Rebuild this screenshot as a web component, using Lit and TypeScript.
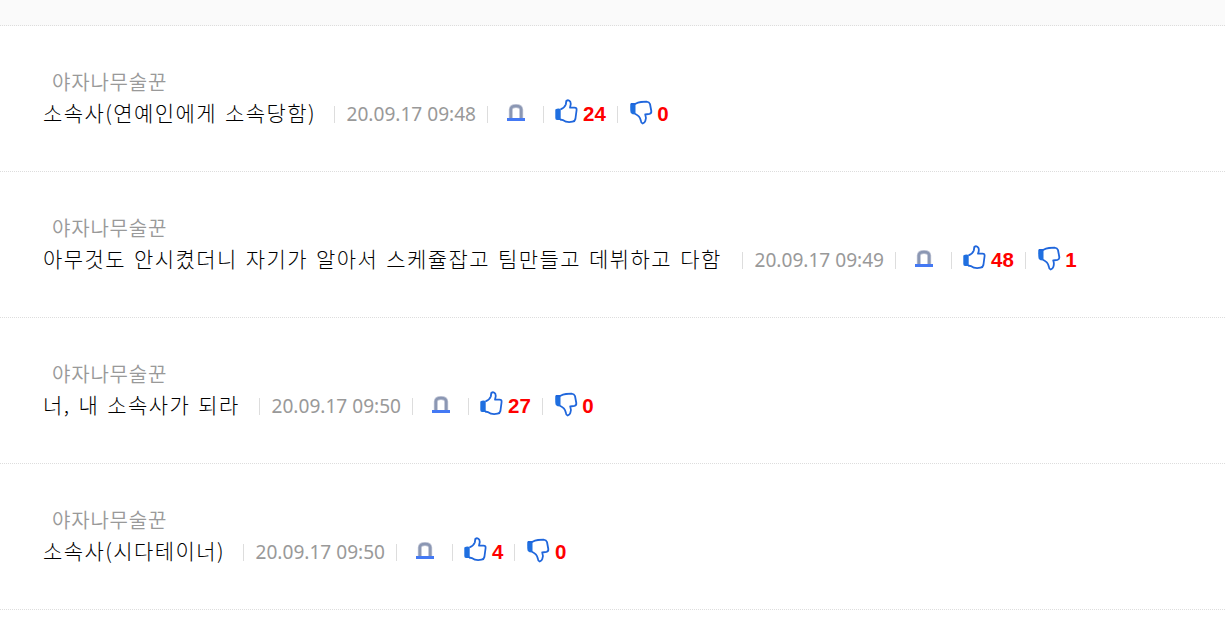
import { html, css, LitElement } from 'lit';
import { customElement, property } from 'lit/decorators.js';

interface Comment {
  author: string;
  text: string;
  date: string;
  likes: number;
  dislikes: number;
  width: number;
}

const COMMENTS: Comment[] = [
  { author: '야자나무술꾼', text: '소속사(연예인에게 소속당함)', date: '20.09.17 09:48', likes: 24, dislikes: 0, width: 291 },
  { author: '야자나무술꾼', text: '아무것도 안시켰더니 자기가 알아서 스케쥴잡고 팀만들고 데뷔하고 다함', date: '20.09.17 09:49', likes: 48, dislikes: 1, width: 699 },
  { author: '야자나무술꾼', text: '너, 내 소속사가 되라', date: '20.09.17 09:50', likes: 27, dislikes: 0, width: 216 },
  { author: '야자나무술꾼', text: '소속사(시다테이너)', date: '20.09.17 09:50', likes: 4, dislikes: 0, width: 200 },
];

@customElement('comment-row')
export class CommentRow extends LitElement {
  static override styles = css`
    :host {
      display: block;
      box-sizing: border-box;
      height: 146px;
      padding: 41px 0 0 43px;
      border-bottom: 1px dotted #ddd;
    }
    .author {
      height: 31px;
      padding-left: 9px;
      color: #999;
      font: 350 20px/30px 'Noto Sans CJK KR', sans-serif;
      letter-spacing: 0.8px;
    }
    .line {
      display: flex;
      align-items: center;
      height: 32px;
      white-space: nowrap;
    }
    .text {
      flex: none;
      height: 32px;
      color: #000;
      font: 300 21px/28px 'Noto Sans CJK KR', sans-serif;
      letter-spacing: 1.42px;
      word-spacing: 2px;
    }
    .date {
      width: 129.5px;
      padding: 0 11px 0 11.5px;
      color: #999;
      font: 19.1px/32px 'Noto Sans', sans-serif;
    }
    .divider {
      flex: none;
      width: 1px;
      height: 17px;
      background: #ddd;
    }
    .report {
      width: 18px;
      height: 18px;
      margin: 0 18px 2px 19px;
      overflow: visible;
    }
    .vote {
      display: flex;
      align-items: center;
      padding: 0 11px;
      color: #f00;
      font: bold 20.5px/32px 'Liberation Sans', sans-serif;
    }
    .thumb {
      width: 24px;
      height: 26px;
      margin: 0 4px 4px 0;
      overflow: visible;
    }
    .down {
      margin-right: 4.5px;
    }
  `;

  @property({ attribute: false }) comment!: Comment;

  override render() {
    const { author, text, date, likes, dislikes, width } = this.comment;
    return html`
      <div class="author">${author}</div>
      <div class="line">
        <span class="text" style="width: ${width}px">${text}</span>
        <i class="divider"></i>
        <span class="date">${date}</span>
        <i class="divider"></i>
        <svg class="report" viewBox="0 0 18 18">
          <path d="M3.8 14V5.5Q4 2 9 2T14.2 5.5V14" fill="none" stroke="#c3c8d8" stroke-width="4" />
          <path d="M3.8 14V5.5Q4 2 9 2T14.2 5.5V14" fill="none" stroke="#8b97b3" stroke-width="2.6" />
          <path d="M0 14H18V17H0Z" fill="#4479f4" />
        </svg>
        <i class="divider"></i>
        <span class="vote">
          <svg class="thumb" viewBox="0 0 24 26">
            <path d="M.3 10.5Q3 9 5.7 10V21H2Q.3 21 .3 19Z" fill="#1f6fe0" />
            <path d="M5.5 10.3Q9.5 9 10.8 5.5L11.3 2Q13.5 .2 15.3 2.7Q16.5 5 15 8.6H19.5Q21.8 8.6 21.6 11L20.4 20Q20 22.2 17.5 22.7Q14 23.6 11 22.7Q8 20.7 5 20.5" fill="none" stroke="#1f66dc" stroke-width="1.8" stroke-linejoin="round" />
          </svg>
          ${likes}
        </span>
        <i class="divider"></i>
        <span class="vote">
          <svg class="thumb down" viewBox="0 0 24 26">
            <path d="M1.3 4.5H6.5V15.5Q3 15.5 1.8 14Q1 12 1.3 4.5Z" fill="#1f6fe0" />
            <path d="M2 5H6Q9 3.2 12 3L17.5 2.7Q20.3 3 21 5L22.3 12Q22.6 14.3 20.5 14.8L16.2 15.5Q17.5 18.5 16.3 22Q15.5 24.3 13.6 24.5Q12 24 11.8 21.5Q11 17 6 14.7" fill="none" stroke="#1f66dc" stroke-width="1.8" stroke-linejoin="round" />
          </svg>
          ${dislikes}
        </span>
      </div>
    `;
  }
}

@customElement('app-root')
export class AppRoot extends LitElement {
  static override styles = css`
    :host {
      display: block;
      height: 618px;
      overflow: hidden;
      background: #fff;
    }
    .top {
      height: 25px;
      background: #fafafa;
      border-bottom: 1px dotted #ddd;
    }
  `;

  override render() {
    return html`
      <div class="top"></div>
      ${COMMENTS.map((comment) => html`<comment-row .comment=${comment}></comment-row>`)}
    `;
  }
}
